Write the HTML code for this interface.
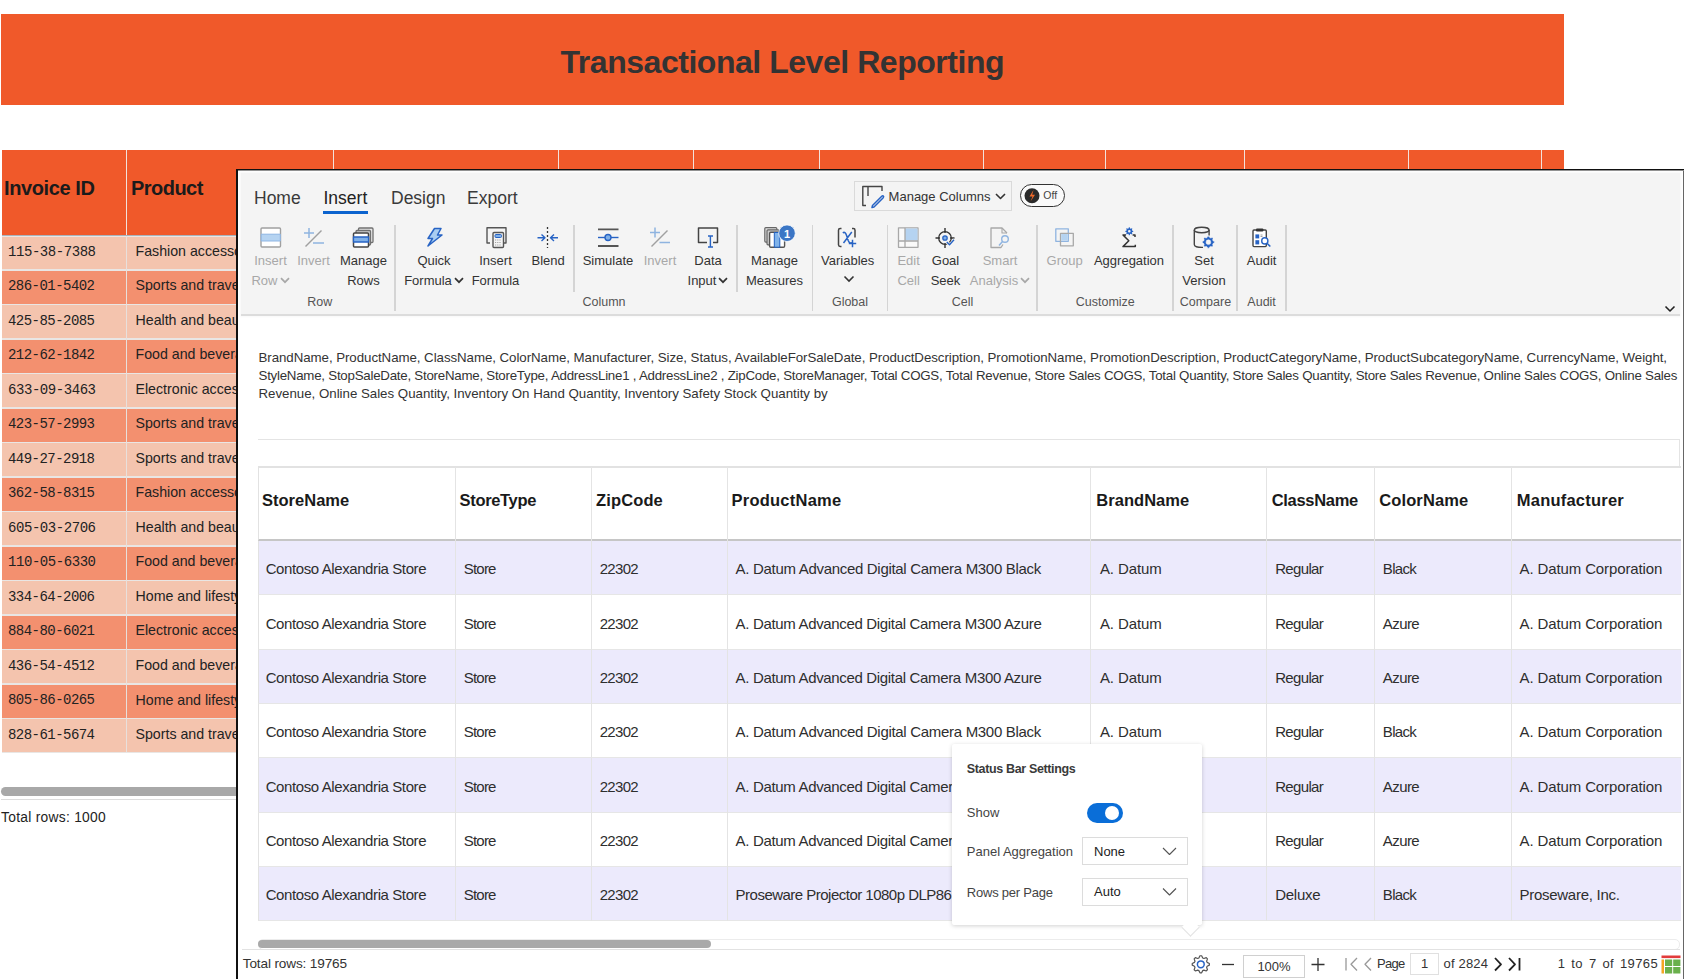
<!DOCTYPE html>
<html><head><meta charset="utf-8"><style>
*{box-sizing:border-box;margin:0;padding:0}
html,body{width:1684px;height:979px;overflow:hidden;background:#fff;font-family:"Liberation Sans",sans-serif;color:#222}
body{position:relative}
.a{position:absolute}
.nw{white-space:nowrap}
svg{position:absolute;overflow:visible}
</style></head><body>
<div class="a" style="left:1px;top:14px;width:1563px;height:91px;background:#F0592A"></div>
<div class="a nw" style="left:560.5px;top:46.21px;font-size:32px;line-height:32px;color:#333;font-weight:bold;letter-spacing:-0.463px;">Transactional Level Reporting</div>
<div class="a" style="left:2px;top:150px;width:1562px;height:85px;background:#F0592A"></div>
<div class="a" style="left:126px;top:150px;width:1px;height:88px;background:#f2e2dc"></div>
<div class="a" style="left:333px;top:150px;width:1px;height:88px;background:#f2e2dc"></div>
<div class="a" style="left:558px;top:150px;width:1px;height:88px;background:#f2e2dc"></div>
<div class="a" style="left:693px;top:150px;width:1px;height:88px;background:#f2e2dc"></div>
<div class="a" style="left:819px;top:150px;width:1px;height:88px;background:#f2e2dc"></div>
<div class="a" style="left:983px;top:150px;width:1px;height:88px;background:#f2e2dc"></div>
<div class="a" style="left:1105px;top:150px;width:1px;height:88px;background:#f2e2dc"></div>
<div class="a" style="left:1244px;top:150px;width:1px;height:88px;background:#f2e2dc"></div>
<div class="a" style="left:1408px;top:150px;width:1px;height:88px;background:#f2e2dc"></div>
<div class="a" style="left:1541px;top:150px;width:1px;height:88px;background:#f2e2dc"></div>
<div class="a nw" style="left:4px;top:177.67px;font-size:20px;line-height:20px;color:#1b1b1b;font-weight:bold;letter-spacing:-0.392px;">Invoice ID</div>
<div class="a nw" style="left:131px;top:178.07px;font-size:20px;line-height:20px;color:#1b1b1b;font-weight:bold;letter-spacing:-0.533px;">Product</div>
<div class="a" style="left:2px;top:235px;width:240px;height:1px;background:#a9b4bb"></div>
<div class="a" style="left:2px;top:235.5px;width:240px;height:517px;background:#e9e6e4"></div>
<div class="a" style="left:2px;top:237.00px;width:240px;height:32.21px;background:#F4C4AE"></div>
<div class="a nw" style="left:8px;top:244.75px;font-size:14px;line-height:14px;color:#222;font-weight:normal;font-family:'Liberation Mono',monospace;letter-spacing:-0.441px;">115-38-7388</div>
<div class="a nw" style="left:135.5px;top:243.88px;font-size:14.2px;line-height:14.2px;color:#222;font-weight:normal;">Fashion accessories</div>
<div class="a" style="left:2px;top:270.51px;width:240px;height:33.21px;background:#F3906F"></div>
<div class="a nw" style="left:8px;top:279.26px;font-size:14px;line-height:14px;color:#222;font-weight:normal;font-family:'Liberation Mono',monospace;letter-spacing:-0.541px;">286-01-5402</div>
<div class="a nw" style="left:135.5px;top:278.39px;font-size:14.2px;line-height:14.2px;color:#222;font-weight:normal;">Sports and travel</div>
<div class="a" style="left:2px;top:305.02px;width:240px;height:33.21px;background:#F4C4AE"></div>
<div class="a nw" style="left:8px;top:313.77px;font-size:14px;line-height:14px;color:#222;font-weight:normal;font-family:'Liberation Mono',monospace;letter-spacing:-0.541px;">425-85-2085</div>
<div class="a nw" style="left:135.5px;top:312.90px;font-size:14.2px;line-height:14.2px;color:#222;font-weight:normal;">Health and beauty</div>
<div class="a" style="left:2px;top:339.53px;width:240px;height:33.21px;background:#F3906F"></div>
<div class="a nw" style="left:8px;top:348.28px;font-size:14px;line-height:14px;color:#222;font-weight:normal;font-family:'Liberation Mono',monospace;letter-spacing:-0.541px;">212-62-1842</div>
<div class="a nw" style="left:135.5px;top:347.41px;font-size:14.2px;line-height:14.2px;color:#222;font-weight:normal;">Food and beverages</div>
<div class="a" style="left:2px;top:374.04px;width:240px;height:33.21px;background:#F4C4AE"></div>
<div class="a nw" style="left:8px;top:382.79px;font-size:14px;line-height:14px;color:#222;font-weight:normal;font-family:'Liberation Mono',monospace;letter-spacing:-0.441px;">633-09-3463</div>
<div class="a nw" style="left:135.5px;top:381.92px;font-size:14.2px;line-height:14.2px;color:#222;font-weight:normal;">Electronic accessories</div>
<div class="a" style="left:2px;top:408.55px;width:240px;height:33.21px;background:#F3906F"></div>
<div class="a nw" style="left:8px;top:417.30px;font-size:14px;line-height:14px;color:#222;font-weight:normal;font-family:'Liberation Mono',monospace;letter-spacing:-0.541px;">423-57-2993</div>
<div class="a nw" style="left:135.5px;top:416.43px;font-size:14.2px;line-height:14.2px;color:#222;font-weight:normal;">Sports and travel</div>
<div class="a" style="left:2px;top:443.06px;width:240px;height:33.21px;background:#F4C4AE"></div>
<div class="a nw" style="left:8px;top:451.81px;font-size:14px;line-height:14px;color:#222;font-weight:normal;font-family:'Liberation Mono',monospace;letter-spacing:-0.541px;">449-27-2918</div>
<div class="a nw" style="left:135.5px;top:450.94px;font-size:14.2px;line-height:14.2px;color:#222;font-weight:normal;">Sports and travel</div>
<div class="a" style="left:2px;top:477.57px;width:240px;height:33.21px;background:#F3906F"></div>
<div class="a nw" style="left:8px;top:486.32px;font-size:14px;line-height:14px;color:#222;font-weight:normal;font-family:'Liberation Mono',monospace;letter-spacing:-0.541px;">362-58-8315</div>
<div class="a nw" style="left:135.5px;top:485.45px;font-size:14.2px;line-height:14.2px;color:#222;font-weight:normal;">Fashion accessories</div>
<div class="a" style="left:2px;top:512.08px;width:240px;height:33.21px;background:#F4C4AE"></div>
<div class="a nw" style="left:8px;top:520.83px;font-size:14px;line-height:14px;color:#222;font-weight:normal;font-family:'Liberation Mono',monospace;letter-spacing:-0.441px;">605-03-2706</div>
<div class="a nw" style="left:135.5px;top:519.96px;font-size:14.2px;line-height:14.2px;color:#222;font-weight:normal;">Health and beauty</div>
<div class="a" style="left:2px;top:546.59px;width:240px;height:33.21px;background:#F3906F"></div>
<div class="a nw" style="left:8px;top:555.34px;font-size:14px;line-height:14px;color:#222;font-weight:normal;font-family:'Liberation Mono',monospace;letter-spacing:-0.441px;">110-05-6330</div>
<div class="a nw" style="left:135.5px;top:554.47px;font-size:14.2px;line-height:14.2px;color:#222;font-weight:normal;">Food and beverages</div>
<div class="a" style="left:2px;top:581.10px;width:240px;height:33.21px;background:#F4C4AE"></div>
<div class="a nw" style="left:8px;top:589.85px;font-size:14px;line-height:14px;color:#222;font-weight:normal;font-family:'Liberation Mono',monospace;letter-spacing:-0.541px;">334-64-2006</div>
<div class="a nw" style="left:135.5px;top:588.98px;font-size:14.2px;line-height:14.2px;color:#222;font-weight:normal;">Home and lifestyle</div>
<div class="a" style="left:2px;top:615.61px;width:240px;height:33.21px;background:#F3906F"></div>
<div class="a nw" style="left:8px;top:624.36px;font-size:14px;line-height:14px;color:#222;font-weight:normal;font-family:'Liberation Mono',monospace;letter-spacing:-0.541px;">884-80-6021</div>
<div class="a nw" style="left:135.5px;top:623.49px;font-size:14.2px;line-height:14.2px;color:#222;font-weight:normal;">Electronic accessories</div>
<div class="a" style="left:2px;top:650.12px;width:240px;height:33.21px;background:#F4C4AE"></div>
<div class="a nw" style="left:8px;top:658.87px;font-size:14px;line-height:14px;color:#222;font-weight:normal;font-family:'Liberation Mono',monospace;letter-spacing:-0.541px;">436-54-4512</div>
<div class="a nw" style="left:135.5px;top:658.00px;font-size:14.2px;line-height:14.2px;color:#222;font-weight:normal;">Food and beverages</div>
<div class="a" style="left:2px;top:684.63px;width:240px;height:33.21px;background:#F3906F"></div>
<div class="a nw" style="left:8px;top:693.38px;font-size:14px;line-height:14px;color:#222;font-weight:normal;font-family:'Liberation Mono',monospace;letter-spacing:-0.541px;">805-86-0265</div>
<div class="a nw" style="left:135.5px;top:692.51px;font-size:14.2px;line-height:14.2px;color:#222;font-weight:normal;">Home and lifestyle</div>
<div class="a" style="left:2px;top:719.14px;width:240px;height:32.86px;background:#F4C4AE"></div>
<div class="a nw" style="left:8px;top:727.89px;font-size:14px;line-height:14px;color:#222;font-weight:normal;font-family:'Liberation Mono',monospace;letter-spacing:-0.541px;">828-61-5674</div>
<div class="a nw" style="left:135.5px;top:727.02px;font-size:14.2px;line-height:14.2px;color:#222;font-weight:normal;">Sports and travel</div>
<div class="a" style="left:126px;top:236px;width:1px;height:516px;background:#e8e0dc"></div>
<div class="a" style="left:1px;top:787px;width:240px;height:9px;border-radius:5px;background:#a8a8a8"></div>
<div class="a" style="left:1px;top:799px;width:240px;height:1px;background:#dcdcdc"></div>
<div class="a nw" style="left:1px;top:810.52px;font-size:13.8px;line-height:13.8px;color:#222;font-weight:normal;letter-spacing:0.281px;">Total rows: 1000</div>
<div class="a" style="left:236px;top:169px;width:1448px;height:810px;background:#fff;border-left:2px solid #111;border-top:1px solid #111;box-shadow:inset 0 1px 0 #8a8a8a"></div>
<div class="a" style="left:1683px;top:171px;width:1px;height:808px;background:#666"></div>
<div class="a" style="left:241px;top:173px;width:1439px;height:143px;background:#f4f4f4;border-bottom:2px solid #dcdcdc;box-shadow:0 0 2px 1px #f8f8f8"></div>
<div class="a nw" style="left:254px;top:190.39px;font-size:17.5px;line-height:17.5px;color:#3a3a3a;font-weight:normal;">Home</div>
<div class="a nw" style="left:323.5px;top:190.39px;font-size:17.5px;line-height:17.5px;color:#222;font-weight:normal;">Insert</div>
<div class="a nw" style="left:391px;top:190.39px;font-size:17.5px;line-height:17.5px;color:#3a3a3a;font-weight:normal;">Design</div>
<div class="a nw" style="left:467px;top:190.39px;font-size:17.5px;line-height:17.5px;color:#3a3a3a;font-weight:normal;">Export</div>
<div class="a" style="left:323px;top:211px;width:45px;height:3px;background:#0b63ce"></div>
<div class="a nw" style="left:-29.5px;width:600px;text-align:center;top:253.90px;font-size:13px;line-height:13px;color:#a8a8a8;font-weight:normal;">Insert</div>
<div class="a nw" style="left:-29.5px;width:600px;text-align:center;top:273.60px;font-size:13px;line-height:13px;color:#a8a8a8;font-weight:normal;">Row<svg width="10" height="7" style="position:relative;display:inline-block;vertical-align:middle;margin-left:2px;top:-1px" viewBox="0 0 10 7"><path d="M1 1.2 L5 5.2 L9 1.2" fill="none" stroke="#a8a8a8" stroke-width="1.7"/></svg></div>
<div class="a nw" style="left:13.5px;width:600px;text-align:center;top:253.90px;font-size:13px;line-height:13px;color:#a8a8a8;font-weight:normal;">Invert</div>
<div class="a nw" style="left:63.5px;width:600px;text-align:center;top:253.90px;font-size:13px;line-height:13px;color:#333;font-weight:normal;">Manage</div>
<div class="a nw" style="left:63.5px;width:600px;text-align:center;top:273.60px;font-size:13px;line-height:13px;color:#333;font-weight:normal;">Rows</div>
<div class="a nw" style="left:134px;width:600px;text-align:center;top:253.90px;font-size:13px;line-height:13px;color:#333;font-weight:normal;">Quick</div>
<div class="a nw" style="left:134px;width:600px;text-align:center;top:273.60px;font-size:13px;line-height:13px;color:#333;font-weight:normal;">Formula<svg width="10" height="7" style="position:relative;display:inline-block;vertical-align:middle;margin-left:2px;top:-1px" viewBox="0 0 10 7"><path d="M1 1.2 L5 5.2 L9 1.2" fill="none" stroke="#333" stroke-width="1.7"/></svg></div>
<div class="a nw" style="left:195.5px;width:600px;text-align:center;top:253.90px;font-size:13px;line-height:13px;color:#333;font-weight:normal;">Insert</div>
<div class="a nw" style="left:195.5px;width:600px;text-align:center;top:273.60px;font-size:13px;line-height:13px;color:#333;font-weight:normal;">Formula</div>
<div class="a nw" style="left:248.20000000000005px;width:600px;text-align:center;top:253.90px;font-size:13px;line-height:13px;color:#333;font-weight:normal;">Blend</div>
<div class="a nw" style="left:308px;width:600px;text-align:center;top:253.90px;font-size:13px;line-height:13px;color:#333;font-weight:normal;">Simulate</div>
<div class="a nw" style="left:360px;width:600px;text-align:center;top:253.90px;font-size:13px;line-height:13px;color:#a8a8a8;font-weight:normal;">Invert</div>
<div class="a nw" style="left:408px;width:600px;text-align:center;top:253.90px;font-size:13px;line-height:13px;color:#333;font-weight:normal;">Data</div>
<div class="a nw" style="left:408px;width:600px;text-align:center;top:273.60px;font-size:13px;line-height:13px;color:#333;font-weight:normal;">Input<svg width="10" height="7" style="position:relative;display:inline-block;vertical-align:middle;margin-left:2px;top:-1px" viewBox="0 0 10 7"><path d="M1 1.2 L5 5.2 L9 1.2" fill="none" stroke="#333" stroke-width="1.7"/></svg></div>
<div class="a nw" style="left:474.5px;width:600px;text-align:center;top:253.90px;font-size:13px;line-height:13px;color:#333;font-weight:normal;">Manage</div>
<div class="a nw" style="left:474.5px;width:600px;text-align:center;top:273.60px;font-size:13px;line-height:13px;color:#333;font-weight:normal;">Measures</div>
<div class="a nw" style="left:547.7px;width:600px;text-align:center;top:253.90px;font-size:13px;line-height:13px;color:#333;font-weight:normal;">Variables</div>
<svg style="left:0;top:0" width="1" height="1"><path d="M844.5 276.5 L849 281 L853.5 276.5" fill="none" stroke="#333" stroke-width="1.6"/></svg>
<div class="a nw" style="left:608.6px;width:600px;text-align:center;top:253.90px;font-size:13px;line-height:13px;color:#a8a8a8;font-weight:normal;">Edit</div>
<div class="a nw" style="left:608.6px;width:600px;text-align:center;top:273.60px;font-size:13px;line-height:13px;color:#a8a8a8;font-weight:normal;">Cell</div>
<div class="a nw" style="left:645.5px;width:600px;text-align:center;top:253.90px;font-size:13px;line-height:13px;color:#333;font-weight:normal;">Goal</div>
<div class="a nw" style="left:645.5px;width:600px;text-align:center;top:273.60px;font-size:13px;line-height:13px;color:#333;font-weight:normal;">Seek</div>
<div class="a nw" style="left:700px;width:600px;text-align:center;top:253.90px;font-size:13px;line-height:13px;color:#a8a8a8;font-weight:normal;">Smart</div>
<div class="a nw" style="left:700px;width:600px;text-align:center;top:273.60px;font-size:13px;line-height:13px;color:#a8a8a8;font-weight:normal;">Analysis<svg width="10" height="7" style="position:relative;display:inline-block;vertical-align:middle;margin-left:2px;top:-1px" viewBox="0 0 10 7"><path d="M1 1.2 L5 5.2 L9 1.2" fill="none" stroke="#a8a8a8" stroke-width="1.7"/></svg></div>
<div class="a nw" style="left:764.5999999999999px;width:600px;text-align:center;top:253.90px;font-size:13px;line-height:13px;color:#a8a8a8;font-weight:normal;">Group</div>
<div class="a nw" style="left:829px;width:600px;text-align:center;top:253.90px;font-size:13px;line-height:13px;color:#333;font-weight:normal;">Aggregation</div>
<div class="a nw" style="left:904px;width:600px;text-align:center;top:253.90px;font-size:13px;line-height:13px;color:#333;font-weight:normal;">Set</div>
<div class="a nw" style="left:904px;width:600px;text-align:center;top:273.60px;font-size:13px;line-height:13px;color:#333;font-weight:normal;">Version</div>
<div class="a nw" style="left:961.5999999999999px;width:600px;text-align:center;top:253.90px;font-size:13px;line-height:13px;color:#333;font-weight:normal;">Audit</div>
<div class="a nw" style="left:19.80000000000001px;width:600px;text-align:center;top:295.72px;font-size:12.5px;line-height:12.5px;color:#555;font-weight:normal;">Row</div>
<div class="a nw" style="left:304px;width:600px;text-align:center;top:295.72px;font-size:12.5px;line-height:12.5px;color:#555;font-weight:normal;">Column</div>
<div class="a nw" style="left:550px;width:600px;text-align:center;top:295.72px;font-size:12.5px;line-height:12.5px;color:#555;font-weight:normal;">Global</div>
<div class="a nw" style="left:662.6px;width:600px;text-align:center;top:295.72px;font-size:12.5px;line-height:12.5px;color:#555;font-weight:normal;">Cell</div>
<div class="a nw" style="left:805.3px;width:600px;text-align:center;top:295.72px;font-size:12.5px;line-height:12.5px;color:#555;font-weight:normal;">Customize</div>
<div class="a nw" style="left:905.4000000000001px;width:600px;text-align:center;top:295.72px;font-size:12.5px;line-height:12.5px;color:#555;font-weight:normal;">Compare</div>
<div class="a nw" style="left:961.5999999999999px;width:600px;text-align:center;top:295.72px;font-size:12.5px;line-height:12.5px;color:#555;font-weight:normal;">Audit</div>
<div class="a" style="left:394.2px;top:225px;width:1.5px;height:86px;background:#d4d4d4"></div>
<div class="a" style="left:811.8px;top:225px;width:1.5px;height:86px;background:#d4d4d4"></div>
<div class="a" style="left:886.8px;top:225px;width:1.5px;height:86px;background:#d4d4d4"></div>
<div class="a" style="left:1036.4px;top:225px;width:1.5px;height:86px;background:#d4d4d4"></div>
<div class="a" style="left:1172.3px;top:225px;width:1.5px;height:86px;background:#d4d4d4"></div>
<div class="a" style="left:1236.4px;top:225px;width:1.5px;height:86px;background:#d4d4d4"></div>
<div class="a" style="left:1285.0px;top:225px;width:1.5px;height:86px;background:#d4d4d4"></div>
<div class="a" style="left:573.2px;top:225px;width:1.5px;height:67px;background:#d4d4d4"></div>
<div class="a" style="left:736.3px;top:225px;width:1.5px;height:67px;background:#d4d4d4"></div>
<div class="a" style="left:854px;top:181px;width:158px;height:30px;border:1px solid #dadada;background:#f4f4f4"></div>
<div class="a nw" style="left:888.6px;top:189.50px;font-size:13px;line-height:13px;color:#333;font-weight:normal;">Manage Columns</div>
<div class="a" style="left:1020px;top:184px;width:45px;height:23px;border:1.3px solid #333;border-radius:12px;background:#fafafa"></div>
<div class="a nw" style="left:1043.3px;top:190.41px;font-size:10.5px;line-height:10.5px;color:#444;font-weight:normal;">Off</div>

<svg style="left:0;top:0" width="1684" height="979">
<g fill="none" stroke-linejoin="round">
 <!-- insert row (disabled) -->
 <rect x="261" y="228" width="19.5" height="19" rx="1" fill="#fff" stroke="#a0a0a0" stroke-width="1.4"/>
 <rect x="261.2" y="234.2" width="19.1" height="6.8" fill="#b5d3f1" stroke="#8fb6e4" stroke-width="1"/>
 <!-- invert disabled -->
 <path d="M304 233 H314 M309 228 V238" stroke="#8fb4e0" stroke-width="1.5"/>
 <path d="M305.5 246.5 L321.5 230.5" stroke="#a0a0a0" stroke-width="1.5"/>
 <path d="M313 243 H324" stroke="#8fb4e0" stroke-width="1.5"/>
 <!-- manage rows -->
 <rect x="358.5" y="228" width="14.5" height="14.5" rx="1" fill="#e8e8e8" stroke="#707070" stroke-width="1.3"/>
 <rect x="356" y="230.5" width="14.5" height="14.5" rx="1" fill="#d0d0d0" stroke="#707070" stroke-width="1.3"/>
 <rect x="353.5" y="233" width="15" height="14" rx="1" fill="#fff" stroke="#444" stroke-width="1.5"/>
 <rect x="353.5" y="237" width="15" height="5" fill="#7fb0e8" stroke="#2763c4" stroke-width="1.3"/>
 <!-- quick formula -->
 <path d="M434.5 228.5 L441 228.5 L437.5 235 L442 235 L428 246 L432.5 238.5 L428 238.5 Z" fill="#a9cdf2" stroke="#2763c4" stroke-width="1.5"/>
 <!-- insert formula -->
 <path d="M490 243 H487 V227.8 H506 V243 H503.5" stroke="#555" stroke-width="1.4"/>
 <rect x="493" y="232.5" width="10.5" height="15" rx="1" fill="#f4f4f4" stroke="#555" stroke-width="1.4"/>
 <rect x="495" y="234.5" width="6.5" height="3" rx="1" fill="#7fb0e8" stroke="#2763c4" stroke-width="1"/>
 <path d="M495 240 h6.5 M495 242.5 h6.5 M495 245 h6.5" stroke="#999" stroke-width="0.9" stroke-dasharray="1.2 1"/>
 <!-- blend -->
 <path d="M547.5 227 V248" stroke="#333" stroke-width="1.3" stroke-dasharray="2 2"/>
 <path d="M537.5 237.8 H545 M541.5 234.5 L545 237.8 L541.5 241" stroke="#2763c4" stroke-width="1.4"/>
 <path d="M558 237.8 H550.5 M554 234.5 L550.5 237.8 L554 241" stroke="#2763c4" stroke-width="1.4"/>
 <!-- simulate -->
 <path d="M598 229.3 H618.5 M598 246 H618.5" stroke="#555" stroke-width="1.8"/>
 <path d="M598 237.5 H618.5" stroke="#2763c4" stroke-width="1.4"/>
 <circle cx="608" cy="237.5" r="3" fill="#7fb0e8" stroke="#2763c4" stroke-width="1.4"/>
 <!-- invert disabled 2 -->
 <path d="M650 232.5 H660 M655 227.5 V237.5" stroke="#8fb4e0" stroke-width="1.5"/>
 <path d="M651.5 246.5 L667.5 230.5" stroke="#a0a0a0" stroke-width="1.5"/>
 <path d="M659.5 242.5 H670" stroke="#8fb4e0" stroke-width="1.5"/>
 <!-- data input -->
 <path d="M707 242.5 H698.5 V228 H717.5 V242.5 H713" stroke="#444" stroke-width="1.5"/>
 <path d="M710.4 236 V247 M708 236 H713 M708 247 H713" stroke="#2763c4" stroke-width="1.4"/>
 <!-- manage measures -->
 <rect x="764.8" y="227.6" width="12" height="14.5" rx="1" fill="#ddd" stroke="#666" stroke-width="1.2"/>
 <rect x="767" y="229.8" width="12" height="15" rx="1" fill="#ccc" stroke="#666" stroke-width="1.2"/>
 <rect x="769.6" y="232.2" width="15" height="15" rx="1.2" fill="#fff" stroke="#555" stroke-width="1.4"/>
 <rect x="774.3" y="232.5" width="5.5" height="14.7" fill="#80b3ea" stroke="#2060c0" stroke-width="1"/>
 <circle cx="787" cy="233.2" r="8.3" fill="#3b76c5" stroke="#fff" stroke-width="0.8"/>
 <!-- variables -->
 <path d="M841.5 228.5 H840.2 Q838.5 228.5 838.5 230.2 V244.8 Q838.5 246.5 840.2 246.5 H841.5" stroke="#444" stroke-width="1.5"/>
 <path d="M852 228.5 H853.3 Q855 228.5 855 230.2 V237.5" stroke="#444" stroke-width="1.5"/>
 <path d="M842.8 232.8 Q845.2 231.2 846.6 235.5 L848.2 240.5 Q849.6 244.2 852.2 242.6 M851.8 232 L843.5 243" stroke="#2763c4" stroke-width="1.5"/>
 <path d="M848.8 243.5 H856.2 M852.5 239.8 V247.2" stroke="#2763c4" stroke-width="1.5"/>
 <!-- edit cell disabled -->
 <rect x="898.5" y="227.8" width="19.5" height="19.5" fill="#fafafa" stroke="#a8a8a8" stroke-width="1.3"/>
 <rect x="905" y="228.5" width="12.5" height="12" fill="#b5d3f1"/>
 <path d="M898.5 241 H918 M905 227.8 V247.3" stroke="#a8a8a8" stroke-width="1.3"/>
 <!-- goal seek -->
 <circle cx="945" cy="238" r="6.3" stroke="#333" stroke-width="1.3"/>
 <path d="M945 228 V233 M945 243 V248 M935.5 238 H940 M950 238 H954.5" stroke="#333" stroke-width="1.4"/>
 <circle cx="945" cy="238" r="2.2" fill="#7fb0e8" stroke="#2763c4" stroke-width="1.3"/>
 <path d="M946.5 241.5 L949.8 245 L954.5 239.5" stroke="#f4f4f4" stroke-width="3.2"/>
 <path d="M946.8 242 L949.5 244.8 L954 239.8" stroke="#2763c4" stroke-width="1.4"/>
 <!-- smart analysis disabled -->
 <path d="M1003 244.5 L1001 247.5 H991 V228 H1002 L1007 233" stroke="#a8a8a8" stroke-width="1.3"/>
 <path d="M1002 228 V233 H1007" stroke="#a8a8a8" stroke-width="1.1"/>
 <circle cx="1005" cy="239" r="3.3" stroke="#8fb4e0" stroke-width="1.4"/>
 <path d="M1002.5 241.5 L999 245.5" stroke="#8fb4e0" stroke-width="1.5"/>
 <!-- group disabled -->
 <rect x="1055.8" y="228.8" width="12.5" height="12.5" stroke="#8fb4e0" stroke-width="1.3"/>
 <rect x="1060.5" y="233.3" width="12.8" height="12.5" stroke="#a8a8a8" stroke-width="1.3"/>
 <rect x="1061.2" y="234" width="6.4" height="6.6" fill="#b5d3f1"/>
 <!-- aggregation -->
 <path d="M1126 235 H1123 L1128.8 240.8 L1123 246.6 H1135.3 V244.8 M1132.6 235 H1135 V237" stroke="#333" stroke-width="1.5"/>
 <path d="M1128.91 227.32 L1129.69 227.32 L1130.14 228.52 L1130.67 228.74 L1131.84 228.21 L1132.39 228.76 L1131.86 229.93 L1132.08 230.46 L1133.28 230.91 L1133.28 231.69 L1132.08 232.14 L1131.86 232.67 L1132.39 233.84 L1131.84 234.39 L1130.67 233.86 L1130.14 234.08 L1129.69 235.28 L1128.91 235.28 L1128.46 234.08 L1127.93 233.86 L1126.76 234.39 L1126.21 233.84 L1126.74 232.67 L1126.52 232.14 L1125.32 231.69 L1125.32 230.91 L1126.52 230.46 L1126.74 229.93 L1126.21 228.76 L1126.76 228.21 L1127.93 228.74 L1128.46 228.52 Z M1130.60 231.30 A1.3 1.3 0 1 0 1128.00 231.30 A1.3 1.3 0 1 0 1130.60 231.30 Z" fill="#2763c4" fill-rule="evenodd" stroke="none"/>
 <!-- set version -->
 <ellipse cx="1201.7" cy="230" rx="7.4" ry="2.7" stroke="#444" stroke-width="1.4"/>
 <path d="M1194.3 230 V244.5 C1194.3 246.5 1197 247.5 1203 247.4 M1209.1 230 V235.5" stroke="#444" stroke-width="1.4"/>
 <path d="M1207.81 236.23 L1208.99 236.23 L1209.79 237.61 L1210.66 237.97 L1212.21 237.56 L1213.04 238.39 L1212.63 239.94 L1212.99 240.81 L1214.37 241.61 L1214.37 242.79 L1212.99 243.59 L1212.63 244.46 L1213.04 246.01 L1212.21 246.84 L1210.66 246.43 L1209.79 246.79 L1208.99 248.17 L1207.81 248.17 L1207.01 246.79 L1206.14 246.43 L1204.59 246.84 L1203.76 246.01 L1204.17 244.46 L1203.81 243.59 L1202.43 242.79 L1202.43 241.61 L1203.81 240.81 L1204.17 239.94 L1203.76 238.39 L1204.59 237.56 L1206.14 237.97 L1207.01 237.61 Z M1210.80 242.20 A2.4 2.4 0 1 0 1206.00 242.20 A2.4 2.4 0 1 0 1210.80 242.20 Z" fill="#2763c4" fill-rule="evenodd" stroke="#f4f4f4" stroke-width="0.5"/>
 <!-- audit -->
 <rect x="1253" y="230" width="13.3" height="16.6" rx="1" fill="#fff" stroke="#444" stroke-width="1.4"/>
 <rect x="1256" y="228.4" width="7.4" height="3" rx="1" fill="#333"/>
 <rect x="1255.4" y="234.4" width="3.8" height="4" fill="#2763c4"/>
 <rect x="1255.4" y="240.2" width="3.8" height="4.2" fill="#2763c4"/>
 <path d="M1260.5 235 h2 M1260.5 236.5 h2" stroke="#888" stroke-width="0.8"/>
 <circle cx="1264.8" cy="240.9" r="3.1" fill="#fff" stroke="#2763c4" stroke-width="1.4"/>
 <path d="M1267 243.2 L1270.3 246.5" stroke="#2763c4" stroke-width="1.6"/>
 <!-- manage columns icon -->
 <path d="M866 205.5 H862.8 V186.5 H882 V191 M868 186.5 V196" stroke="#444" stroke-width="1.4"/>
 <path d="M872.5 205.5 L881.5 196.5 C883 195 884.5 196.5 883 198 L874 207 L872 207.5 Z" stroke="#2763c4" stroke-width="1.5"/>
 <path d="M996 194 L1000.5 198.5 L1005 194" stroke="#333" stroke-width="1.6"/>
 <!-- toggle circle -->
 <circle cx="1032" cy="195.8" r="7.5" fill="#2a2a2a"/>
 <path d="M1033.5 190 L1029.5 196.5 L1032.5 196.5 L1030.5 201.5 L1035 194.8 L1032.2 194.8 Z" fill="#f26a2a"/>
 <!-- collapse chevron -->
 <path d="M1665.5 306.5 L1670 311 L1674.5 306.5" stroke="#222" stroke-width="1.6"/>
</g>
<text x="787" y="237.6" font-family="Liberation Sans" font-size="11" font-weight="bold" fill="#fff" text-anchor="middle">1</text>
</svg>

<div class="a nw" style="left:258.5px;top:351.34px;font-size:13.3px;line-height:13.3px;color:#333;font-weight:normal;letter-spacing:-0.059px;">BrandName, ProductName, ClassName, ColorName, Manufacturer, Size, Status, AvailableForSaleDate, ProductDescription, PromotionName, PromotionDescription, ProductCategoryName, ProductSubcategoryName, CurrencyName, Weight,</div>
<div class="a nw" style="left:258.5px;top:368.94px;font-size:13.3px;line-height:13.3px;color:#333;font-weight:normal;letter-spacing:-0.242px;">StyleName, StopSaleDate, StoreName, StoreType, AddressLine1 , AddressLine2 , ZipCode, StoreManager, Total COGS, Total Revenue, Store Sales COGS, Total Quantity, Store Sales Quantity, Store Sales Revenue, Online Sales COGS, Online Sales</div>
<div class="a nw" style="left:258.5px;top:386.54px;font-size:13.3px;line-height:13.3px;color:#333;font-weight:normal;letter-spacing:-0.018px;">Revenue, Online Sales Quantity, Inventory On Hand Quantity, Inventory Safety Stock Quantity by</div>
<div class="a" style="left:258px;top:439px;width:1422px;height:28px;border-top:1px solid #e4e4e4;border-right:1px solid #e4e4e4;background:#fff"></div>
<div class="a" style="left:258px;top:466px;width:1424px;height:75px;background:#fff;border-top:2px solid #e2e2e2;border-left:1px solid #e2e2e2;border-bottom:2px solid #c6c6c6"></div>
<div class="a nw" style="left:262px;top:491.53px;font-size:16.5px;line-height:16.5px;color:#1a1a1a;font-weight:bold;letter-spacing:0.008px;">StoreName</div>
<div class="a nw" style="left:459.6px;top:491.53px;font-size:16.5px;line-height:16.5px;color:#1a1a1a;font-weight:bold;letter-spacing:-0.336px;">StoreType</div>
<div class="a nw" style="left:596px;top:491.53px;font-size:16.5px;line-height:16.5px;color:#1a1a1a;font-weight:bold;letter-spacing:0.131px;">ZipCode</div>
<div class="a nw" style="left:731.5px;top:491.53px;font-size:16.5px;line-height:16.5px;color:#1a1a1a;font-weight:bold;letter-spacing:0.240px;">ProductName</div>
<div class="a nw" style="left:1096.3px;top:491.53px;font-size:16.5px;line-height:16.5px;color:#1a1a1a;font-weight:bold;letter-spacing:0.033px;">BrandName</div>
<div class="a nw" style="left:1271.7px;top:491.53px;font-size:16.5px;line-height:16.5px;color:#1a1a1a;font-weight:bold;letter-spacing:-0.312px;">ClassName</div>
<div class="a nw" style="left:1379.2px;top:491.53px;font-size:16.5px;line-height:16.5px;color:#1a1a1a;font-weight:bold;letter-spacing:0.132px;">ColorName</div>
<div class="a nw" style="left:1516.8px;top:491.53px;font-size:16.5px;line-height:16.5px;color:#1a1a1a;font-weight:bold;letter-spacing:0.218px;">Manufacturer</div>
<div class="a" style="left:258px;top:541.0px;width:1424px;height:54.3px;background:#ECEAFC;border-bottom:1px solid #e6e6e6;border-left:1px solid #e2e2e2"></div>
<div class="a nw" style="left:265.7px;top:561.20px;font-size:15px;line-height:15px;color:#2e2e2e;font-weight:normal;letter-spacing:-0.404px;">Contoso Alexandria Store</div>
<div class="a nw" style="left:463.8px;top:561.20px;font-size:15px;line-height:15px;color:#2e2e2e;font-weight:normal;letter-spacing:-0.802px;">Store</div>
<div class="a nw" style="left:599.7px;top:561.20px;font-size:15px;line-height:15px;color:#2e2e2e;font-weight:normal;letter-spacing:-0.692px;">22302</div>
<div class="a nw" style="left:735.6px;top:561.20px;font-size:15px;line-height:15px;color:#2e2e2e;font-weight:normal;letter-spacing:-0.305px;">A. Datum Advanced Digital Camera M300 Black</div>
<div class="a nw" style="left:1099.9px;top:561.20px;font-size:15px;line-height:15px;color:#2e2e2e;font-weight:normal;letter-spacing:-0.089px;">A. Datum</div>
<div class="a nw" style="left:1275.2px;top:561.20px;font-size:15px;line-height:15px;color:#2e2e2e;font-weight:normal;letter-spacing:-0.656px;">Regular</div>
<div class="a nw" style="left:1382.8px;top:561.20px;font-size:15px;line-height:15px;color:#2e2e2e;font-weight:normal;letter-spacing:-0.670px;">Black</div>
<div class="a nw" style="left:1519.5px;top:561.20px;font-size:15px;line-height:15px;color:#2e2e2e;font-weight:normal;letter-spacing:-0.117px;">A. Datum Corporation</div>
<div class="a" style="left:258px;top:595.3px;width:1424px;height:54.3px;background:#fff;border-bottom:1px solid #e6e6e6;border-left:1px solid #e2e2e2"></div>
<div class="a nw" style="left:265.7px;top:615.53px;font-size:15px;line-height:15px;color:#2e2e2e;font-weight:normal;letter-spacing:-0.404px;">Contoso Alexandria Store</div>
<div class="a nw" style="left:463.8px;top:615.53px;font-size:15px;line-height:15px;color:#2e2e2e;font-weight:normal;letter-spacing:-0.802px;">Store</div>
<div class="a nw" style="left:599.7px;top:615.53px;font-size:15px;line-height:15px;color:#2e2e2e;font-weight:normal;letter-spacing:-0.692px;">22302</div>
<div class="a nw" style="left:735.6px;top:615.53px;font-size:15px;line-height:15px;color:#2e2e2e;font-weight:normal;letter-spacing:-0.333px;">A. Datum Advanced Digital Camera M300 Azure</div>
<div class="a nw" style="left:1099.9px;top:615.53px;font-size:15px;line-height:15px;color:#2e2e2e;font-weight:normal;letter-spacing:-0.089px;">A. Datum</div>
<div class="a nw" style="left:1275.2px;top:615.53px;font-size:15px;line-height:15px;color:#2e2e2e;font-weight:normal;letter-spacing:-0.656px;">Regular</div>
<div class="a nw" style="left:1382.8px;top:615.53px;font-size:15px;line-height:15px;color:#2e2e2e;font-weight:normal;letter-spacing:-0.586px;">Azure</div>
<div class="a nw" style="left:1519.5px;top:615.53px;font-size:15px;line-height:15px;color:#2e2e2e;font-weight:normal;letter-spacing:-0.117px;">A. Datum Corporation</div>
<div class="a" style="left:258px;top:649.7px;width:1424px;height:54.3px;background:#ECEAFC;border-bottom:1px solid #e6e6e6;border-left:1px solid #e2e2e2"></div>
<div class="a nw" style="left:265.7px;top:669.86px;font-size:15px;line-height:15px;color:#2e2e2e;font-weight:normal;letter-spacing:-0.404px;">Contoso Alexandria Store</div>
<div class="a nw" style="left:463.8px;top:669.86px;font-size:15px;line-height:15px;color:#2e2e2e;font-weight:normal;letter-spacing:-0.802px;">Store</div>
<div class="a nw" style="left:599.7px;top:669.86px;font-size:15px;line-height:15px;color:#2e2e2e;font-weight:normal;letter-spacing:-0.692px;">22302</div>
<div class="a nw" style="left:735.6px;top:669.86px;font-size:15px;line-height:15px;color:#2e2e2e;font-weight:normal;letter-spacing:-0.333px;">A. Datum Advanced Digital Camera M300 Azure</div>
<div class="a nw" style="left:1099.9px;top:669.86px;font-size:15px;line-height:15px;color:#2e2e2e;font-weight:normal;letter-spacing:-0.089px;">A. Datum</div>
<div class="a nw" style="left:1275.2px;top:669.86px;font-size:15px;line-height:15px;color:#2e2e2e;font-weight:normal;letter-spacing:-0.656px;">Regular</div>
<div class="a nw" style="left:1382.8px;top:669.86px;font-size:15px;line-height:15px;color:#2e2e2e;font-weight:normal;letter-spacing:-0.586px;">Azure</div>
<div class="a nw" style="left:1519.5px;top:669.86px;font-size:15px;line-height:15px;color:#2e2e2e;font-weight:normal;letter-spacing:-0.117px;">A. Datum Corporation</div>
<div class="a" style="left:258px;top:704.0px;width:1424px;height:54.3px;background:#fff;border-bottom:1px solid #e6e6e6;border-left:1px solid #e2e2e2"></div>
<div class="a nw" style="left:265.7px;top:724.19px;font-size:15px;line-height:15px;color:#2e2e2e;font-weight:normal;letter-spacing:-0.404px;">Contoso Alexandria Store</div>
<div class="a nw" style="left:463.8px;top:724.19px;font-size:15px;line-height:15px;color:#2e2e2e;font-weight:normal;letter-spacing:-0.802px;">Store</div>
<div class="a nw" style="left:599.7px;top:724.19px;font-size:15px;line-height:15px;color:#2e2e2e;font-weight:normal;letter-spacing:-0.692px;">22302</div>
<div class="a nw" style="left:735.6px;top:724.19px;font-size:15px;line-height:15px;color:#2e2e2e;font-weight:normal;letter-spacing:-0.305px;">A. Datum Advanced Digital Camera M300 Black</div>
<div class="a nw" style="left:1099.9px;top:724.19px;font-size:15px;line-height:15px;color:#2e2e2e;font-weight:normal;letter-spacing:-0.089px;">A. Datum</div>
<div class="a nw" style="left:1275.2px;top:724.19px;font-size:15px;line-height:15px;color:#2e2e2e;font-weight:normal;letter-spacing:-0.656px;">Regular</div>
<div class="a nw" style="left:1382.8px;top:724.19px;font-size:15px;line-height:15px;color:#2e2e2e;font-weight:normal;letter-spacing:-0.670px;">Black</div>
<div class="a nw" style="left:1519.5px;top:724.19px;font-size:15px;line-height:15px;color:#2e2e2e;font-weight:normal;letter-spacing:-0.117px;">A. Datum Corporation</div>
<div class="a" style="left:258px;top:758.3px;width:1424px;height:54.3px;background:#ECEAFC;border-bottom:1px solid #e6e6e6;border-left:1px solid #e2e2e2"></div>
<div class="a nw" style="left:265.7px;top:778.52px;font-size:15px;line-height:15px;color:#2e2e2e;font-weight:normal;letter-spacing:-0.404px;">Contoso Alexandria Store</div>
<div class="a nw" style="left:463.8px;top:778.52px;font-size:15px;line-height:15px;color:#2e2e2e;font-weight:normal;letter-spacing:-0.802px;">Store</div>
<div class="a nw" style="left:599.7px;top:778.52px;font-size:15px;line-height:15px;color:#2e2e2e;font-weight:normal;letter-spacing:-0.692px;">22302</div>
<div class="a nw" style="left:735.6px;top:778.52px;font-size:15px;line-height:15px;color:#2e2e2e;font-weight:normal;letter-spacing:-0.333px;">A. Datum Advanced Digital Camera M300 Azure</div>
<div class="a nw" style="left:1099.9px;top:778.52px;font-size:15px;line-height:15px;color:#2e2e2e;font-weight:normal;letter-spacing:-0.089px;">A. Datum</div>
<div class="a nw" style="left:1275.2px;top:778.52px;font-size:15px;line-height:15px;color:#2e2e2e;font-weight:normal;letter-spacing:-0.656px;">Regular</div>
<div class="a nw" style="left:1382.8px;top:778.52px;font-size:15px;line-height:15px;color:#2e2e2e;font-weight:normal;letter-spacing:-0.586px;">Azure</div>
<div class="a nw" style="left:1519.5px;top:778.52px;font-size:15px;line-height:15px;color:#2e2e2e;font-weight:normal;letter-spacing:-0.117px;">A. Datum Corporation</div>
<div class="a" style="left:258px;top:812.6px;width:1424px;height:54.3px;background:#fff;border-bottom:1px solid #e6e6e6;border-left:1px solid #e2e2e2"></div>
<div class="a nw" style="left:265.7px;top:832.85px;font-size:15px;line-height:15px;color:#2e2e2e;font-weight:normal;letter-spacing:-0.404px;">Contoso Alexandria Store</div>
<div class="a nw" style="left:463.8px;top:832.85px;font-size:15px;line-height:15px;color:#2e2e2e;font-weight:normal;letter-spacing:-0.802px;">Store</div>
<div class="a nw" style="left:599.7px;top:832.85px;font-size:15px;line-height:15px;color:#2e2e2e;font-weight:normal;letter-spacing:-0.692px;">22302</div>
<div class="a nw" style="left:735.6px;top:832.85px;font-size:15px;line-height:15px;color:#2e2e2e;font-weight:normal;letter-spacing:-0.333px;">A. Datum Advanced Digital Camera M300 Azure</div>
<div class="a nw" style="left:1099.9px;top:832.85px;font-size:15px;line-height:15px;color:#2e2e2e;font-weight:normal;letter-spacing:-0.089px;">A. Datum</div>
<div class="a nw" style="left:1275.2px;top:832.85px;font-size:15px;line-height:15px;color:#2e2e2e;font-weight:normal;letter-spacing:-0.656px;">Regular</div>
<div class="a nw" style="left:1382.8px;top:832.85px;font-size:15px;line-height:15px;color:#2e2e2e;font-weight:normal;letter-spacing:-0.586px;">Azure</div>
<div class="a nw" style="left:1519.5px;top:832.85px;font-size:15px;line-height:15px;color:#2e2e2e;font-weight:normal;letter-spacing:-0.117px;">A. Datum Corporation</div>
<div class="a" style="left:258px;top:867.0px;width:1424px;height:54.3px;background:#ECEAFC;border-bottom:1px solid #e6e6e6;border-left:1px solid #e2e2e2"></div>
<div class="a nw" style="left:265.7px;top:887.18px;font-size:15px;line-height:15px;color:#2e2e2e;font-weight:normal;letter-spacing:-0.404px;">Contoso Alexandria Store</div>
<div class="a nw" style="left:463.8px;top:887.18px;font-size:15px;line-height:15px;color:#2e2e2e;font-weight:normal;letter-spacing:-0.802px;">Store</div>
<div class="a nw" style="left:599.7px;top:887.18px;font-size:15px;line-height:15px;color:#2e2e2e;font-weight:normal;letter-spacing:-0.692px;">22302</div>
<div class="a nw" style="left:735.6px;top:887.18px;font-size:15px;line-height:15px;color:#2e2e2e;font-weight:normal;letter-spacing:-0.515px;">Proseware Projector 1080p DLP86</div>
<div class="a nw" style="left:1099.9px;top:887.18px;font-size:15px;line-height:15px;color:#2e2e2e;font-weight:normal;">Proseware</div>
<div class="a nw" style="left:1275.2px;top:887.18px;font-size:15px;line-height:15px;color:#2e2e2e;font-weight:normal;letter-spacing:-0.250px;">Deluxe</div>
<div class="a nw" style="left:1382.8px;top:887.18px;font-size:15px;line-height:15px;color:#2e2e2e;font-weight:normal;letter-spacing:-0.670px;">Black</div>
<div class="a nw" style="left:1519.5px;top:887.18px;font-size:15px;line-height:15px;color:#2e2e2e;font-weight:normal;letter-spacing:-0.274px;">Proseware, Inc.</div>
<div class="a" style="left:454.8px;top:467px;width:1px;height:454px;background:#e4e4e4"></div>
<div class="a" style="left:590.8px;top:467px;width:1px;height:454px;background:#e4e4e4"></div>
<div class="a" style="left:727.1px;top:467px;width:1px;height:454px;background:#e4e4e4"></div>
<div class="a" style="left:1090.3px;top:467px;width:1px;height:454px;background:#e4e4e4"></div>
<div class="a" style="left:1265.9px;top:467px;width:1px;height:454px;background:#e4e4e4"></div>
<div class="a" style="left:1373.5px;top:467px;width:1px;height:454px;background:#e4e4e4"></div>
<div class="a" style="left:1511.1px;top:467px;width:1px;height:454px;background:#e4e4e4"></div>
<div class="a" style="left:1681px;top:316px;width:2px;height:663px;background:#fff"></div>
<div class="a" style="left:952px;top:744px;width:250px;height:181px;background:#fff;box-shadow:0 1px 4px rgba(0,0,0,0.18);border-radius:2px"></div>
<div class="a" style="left:1183.5px;top:921px;width:13px;height:13px;background:#fff;transform:rotate(45deg);border-right:1px solid #e2e2e2;border-bottom:1px solid #e2e2e2"></div>
<div class="a" style="left:1176px;top:912px;width:26px;height:12px;background:#fff"></div>
<div class="a nw" style="left:966.8px;top:763.02px;font-size:12.5px;line-height:12.5px;color:#3a3a3a;font-weight:bold;letter-spacing:-0.353px;">Status Bar Settings</div>
<div class="a nw" style="left:966.8px;top:805.80px;font-size:13px;line-height:13px;color:#444;font-weight:normal;">Show</div>
<div class="a" style="left:1086.5px;top:803px;width:36px;height:20px;border-radius:10px;background:#0a6ed8"></div>
<div class="a" style="left:1105px;top:806px;width:14px;height:14px;border-radius:7px;background:#fff"></div>
<div class="a nw" style="left:966.8px;top:844.80px;font-size:13px;line-height:13px;color:#444;font-weight:normal;">Panel Aggregation</div>
<div class="a" style="left:1082px;top:837px;width:106px;height:28px;border:1px solid #dcdcdc;background:#fff"></div>
<div class="a nw" style="left:1094px;top:844.50px;font-size:13px;line-height:13px;color:#222;font-weight:normal;">None</div>
<div class="a nw" style="left:966.8px;top:885.80px;font-size:13px;line-height:13px;color:#444;font-weight:normal;letter-spacing:-0.221px;">Rows per Page</div>
<div class="a" style="left:1082px;top:877.5px;width:106px;height:28px;border:1px solid #dcdcdc;background:#fff"></div>
<div class="a nw" style="left:1094px;top:885.00px;font-size:13px;line-height:13px;color:#222;font-weight:normal;">Auto</div>
<div class="a" style="left:258px;top:939px;width:1422px;height:10.5px;border:1px solid #ececec;border-radius:5px"></div>
<div class="a" style="left:258px;top:939.5px;width:453px;height:8.5px;border-radius:4.5px;background:#a9a9a9"></div>
<div class="a" style="left:242px;top:948.5px;width:1438px;height:1px;background:#e2e2e2"></div>
<div class="a nw" style="left:242.8px;top:957.09px;font-size:13.6px;line-height:13.6px;color:#333;font-weight:normal;letter-spacing:-0.143px;">Total rows: 19765</div>
<div class="a" style="left:1242.5px;top:955px;width:62.5px;height:23px;border:1px solid #d0d0d0;background:#fff"></div>
<div class="a nw" style="left:974px;width:600px;text-align:center;top:960.00px;font-size:13px;line-height:13px;color:#333;font-weight:normal;">100%</div>
<div class="a" style="left:1410px;top:952.5px;width:29px;height:22.5px;border:1px solid #e0e0e0;background:#fff"></div>
<div class="a nw" style="left:1124.5px;width:600px;text-align:center;top:957.00px;font-size:13px;line-height:13px;color:#333;font-weight:normal;">1</div>
<div class="a nw" style="left:1377px;top:956.80px;font-size:13px;line-height:13px;color:#333;font-weight:normal;letter-spacing:-0.710px;">Page</div>
<div class="a nw" style="left:1443.5px;top:956.80px;font-size:13px;line-height:13px;color:#333;font-weight:normal;letter-spacing:0.176px;">of 2824</div>
<div class="a nw" style="left:1557.8px;top:956.80px;font-size:13px;line-height:13px;color:#333;font-weight:normal;letter-spacing:0.364px;word-spacing:2px;">1 to 7 of 19765</div>

<svg style="left:0;top:0" width="1684" height="979">
<g fill="none" stroke-linejoin="round">
 <path d="M1192 964 L1210 964" stroke="none"/>
 <path d="M1199.96 955.74 L1201.64 955.74 L1202.72 957.98 L1203.91 958.48 L1206.26 957.65 L1207.45 958.84 L1206.62 961.19 L1207.12 962.38 L1209.36 963.46 L1209.36 965.14 L1207.12 966.22 L1206.62 967.41 L1207.45 969.76 L1206.26 970.95 L1203.91 970.12 L1202.72 970.62 L1201.64 972.86 L1199.96 972.86 L1198.88 970.62 L1197.69 970.12 L1195.34 970.95 L1194.15 969.76 L1194.98 967.41 L1194.48 966.22 L1192.24 965.14 L1192.24 963.46 L1194.48 962.38 L1194.98 961.19 L1194.15 958.84 L1195.34 957.65 L1197.69 958.48 L1198.88 957.98 Z" stroke="#555" stroke-width="1.2" fill="#fff"/>
 <circle cx="1200.8" cy="964.3" r="3.4" stroke="#2763c4" stroke-width="1.5"/>
 <path d="M1222 964.5 H1234" stroke="#333" stroke-width="1.3"/>
 <path d="M1311.5 964.5 H1324.5 M1318 958 V971" stroke="#333" stroke-width="1.3"/>
 <path d="M1346 958 V970.5 M1357 958 L1351 964.3 L1357 970.5" stroke="#999" stroke-width="1.3"/>
 <path d="M1371 958 L1365 964.3 L1371 970.5" stroke="#999" stroke-width="1.3"/>
 <path d="M1495 958 L1501 964.3 L1495 970.5" stroke="#222" stroke-width="1.8"/>
 <path d="M1509 958 L1515 964.3 L1509 970.5 M1519.5 958 V970.5" stroke="#222" stroke-width="1.8"/>
 <rect x="1661.5" y="955.5" width="19" height="2.6" fill="#e23b3b"/>
 <rect x="1661.5" y="959.5" width="2.5" height="14" fill="#f5a623"/>
 <rect x="1665" y="959.5" width="7.2" height="6.5" fill="#6ab04c"/>
 <rect x="1673.2" y="959.5" width="7.2" height="6.5" fill="#6ab04c"/>
 <rect x="1665" y="967" width="7.2" height="6.5" fill="#6ab04c"/>
 <rect x="1673.2" y="967" width="7.2" height="6.5" fill="#6ab04c"/>
 <path d="M1163 848 L1169.5 854.5 L1176 848" stroke="#555" stroke-width="1.1"/>
 <path d="M1163 888.5 L1169.5 895 L1176 888.5" stroke="#555" stroke-width="1.1"/>
</g>
</svg>

</body></html>
